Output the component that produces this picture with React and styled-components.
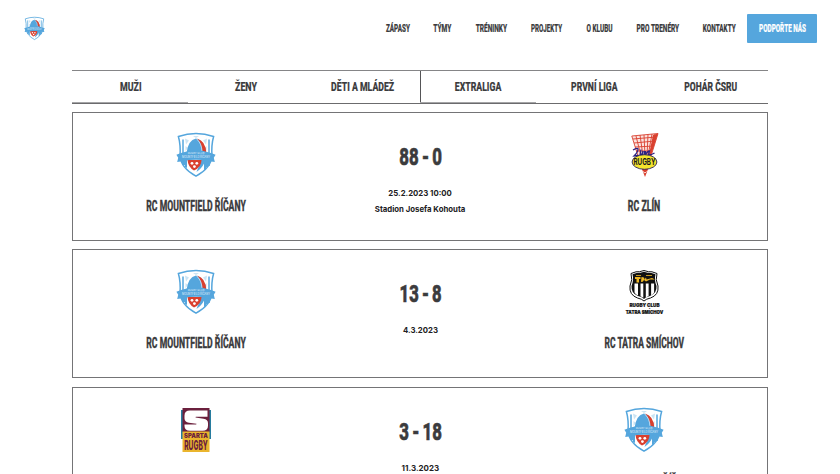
import React, { useLayoutEffect, useRef, useState } from "react";
import styled, { createGlobalStyle, css } from "styled-components";

const ink = "#3b3b3d";
const blue = "#55a6dd";
const red = "#d9402f";

const GlobalStyle = createGlobalStyle`
  * { box-sizing: border-box; }
  html, body { margin: 0; height: 100%; overflow: hidden; background: #fff; }
  body { color: ${ink}; font-family: Roboto, "Liberation Sans", sans-serif; }
`;

const display = css`
  font-family: Roboto, "Liberation Sans", sans-serif;
  font-weight: 800;
  -webkit-text-stroke: 0.2px currentColor;
`;

const FitBox = styled.span`
  display: flex;
  justify-content: center;
  width: ${(p) => p.$w}px;
  white-space: nowrap;
`;

const FitText = styled.span`
  display: block;
  flex: none;
  transform-origin: center;
`;

/* Condenses a label so that it takes exactly the given width. */
function Fit({ w, children }) {
  const ref = useRef(null);
  const [scale, setScale] = useState(1);
  useLayoutEffect(() => {
    setScale(w / parseFloat(getComputedStyle(ref.current).width));
  }, [w, children]);
  return (
    <FitBox $w={w}>
      <FitText ref={ref} style={{ transform: `translateX(0.5px) scaleX(${scale})` }}>
        {children}
      </FitText>
    </FitBox>
  );
}

const Page = styled.div`
  height: 474px;
  overflow: hidden;
`;

const Header = styled.header`
  display: flex;
  align-items: center;
  justify-content: space-between;
  height: 56px;
  padding: 0 23px 0 24px;
`;

const Nav = styled.nav`
  ${display}
  display: flex;
  align-items: center;
  font-size: 10.8px;
  line-height: 29px;
`;

const NavLink = styled.a`
  padding: 0 12px;
`;

const SupportButton = styled.a`
  display: flex;
  justify-content: center;
  width: 70px;
  height: 29px;
  border-radius: 1px;
  background: ${blue};
  color: #fff;
`;

const Main = styled.main`
  width: 696px;
  margin: 14px 0 0 72px;
`;

const Tabs = styled.div`
  display: grid;
  grid-template-columns: 1fr 1fr;
  height: 34px;
  border-top: 1px solid #858587;
  border-bottom: 1px solid #6b6b6d;
`;

const TabGroup = styled.div`
  display: flex;
  ${(p) => p.$divided && css`box-shadow: inset 1px 0 0 #555557;`}
`;

const Tab = styled.button`
  display: flex;
  justify-content: center;
  width: 116px;
  height: 32px;
  padding: 0;
  border: 0;
  border-bottom: 1px solid ${(p) => (p.$active ? "#a5a5a7" : "transparent")};
  background: none;
  color: inherit;
  font-size: 13.3px;
  line-height: 31px;
  ${display}
`;

const Matches = styled.div`
  display: grid;
  gap: 8.35px;
  margin-top: 8px;
`;

const Card = styled.article`
  display: grid;
  grid-template-columns: repeat(3, 224px);
  justify-content: center;
  height: 129px;
  border: 1px solid #747476;
`;

const Team = styled.div`
  display: flex;
  flex-direction: column;
  align-items: center;
  padding-top: 20px;
`;

const TeamName = styled.h3`
  ${display}
  margin: 18px 0 0;
  font-size: 13.8px;
  line-height: 22px;
  -webkit-text-stroke-width: 0.3px;
`;

const Result = styled.div`
  display: flex;
  flex-direction: column;
  align-items: center;
  padding-top: 28px;
`;

const Score = styled.strong`
  ${display}
  margin-bottom: 12px;
  font-size: 24.6px;
  line-height: 32px;
  word-spacing: -0.06em;
  -webkit-text-stroke-width: 0.7px;
`;

const Detail = styled.span`
  color: #202022;
  font: 700 8px/16px Inter, sans-serif;
`;

const Drawing = styled.svg`
  display: block;
  flex: none;
  overflow: visible;
  width: ${(p) => p.$w}px;
  height: ${(p) => p.$h}px;
`;

const RicanyLogo = ({ w = 40, h = 44 }) => (
  <Drawing $w={w} $h={h} viewBox="0 0 40 44">
    <path d="M2.4 3.5Q20-2.6 37.6 3.5 35.2 12 36 23 35 35 20 43.2 5 35 4 23 4.8 12 2.4 3.5Z" fill="#fff" stroke={blue} strokeWidth="1.5" />
    <path d="M7 6.5V20M33 6.500V20" stroke={blue} strokeWidth="1.5" />
    <path d="M9 5.5l4 2-3 4zM17 3l3 2 3-2zM31 5.5l-4 2 3 4zM9.5 13l2.5 2-2.5 3zM30.5 13l-2.5 2 2.5 3z" fill="#cbe4f4" />
    <path d="M10.5 20Q12 7 20 5.4 28 7 29.5 20Z" fill={blue} />
    <path d="M21 5.4Q30 8 30.3 20L26.5 18.5Q26 10 21 5.4Z" fill={red} />
    <path d="M20.500 6Q25.800 10 26 19" fill="none" stroke="#fff" strokeWidth=".6" />
    <path d="M28 27h6v6l-2-1v2h-2v2l-2 1ZM6 27h5v8l-2-1v-2H6Z" fill={blue} />
    <path d="M25.500 26h4q-1.500 8-9 13z" fill={blue} />
    <path d="M11.500 27h14q0 7-7.500 10.500-6-3.500-6.500-10.500Z" fill={red} />
    <g fill="#fff">
      <circle cx="16" cy="30.3" r="1.4" /><circle cx="20.800" cy="30.3" r="1.4" /><circle cx="18.400" cy="33.600" r="1.4" />
    </g>
    <path d="M.4 21.7 5 20Q20 14.5 35 20l4.6 1.700-1.800 3 1 4.200-5.300-.7Q20 25.500 6.500 28.200l-5.300.7 1-4.200Z" fill={blue} />
    <g fill="#fff" fillOpacity=".72" fontFamily="Inter, sans-serif" fontWeight="500" textAnchor="middle">
      <text x="20" y="20.8" fontSize="2.6">RUGBY CLUB</text>
      <text x="20" y="24.8" fontSize="3" textLength="28" lengthAdjust="spacingAndGlyphs">MOUNTFIELD ŘÍČANY</text>
    </g>
  </Drawing>
);

const ZlinLogo = () => (
  <Drawing $w={28} $h={44} viewBox="0 0 28 44">
    <path d="M2 3 28 .5 20 23.500H9Z" fill="#fbe3df" />
    <path d="M1.800 3 28 .5 21 23M1.800 3 8 23M6 3l5 20M10 2l3 21M14 2l1 21M18 1.500l-1 21.500M22 1l-4 22M25 1l-5 22M3 6l23-2M4 10l21-2M5 14l19-1M6 18h16" fill="none" stroke={red} strokeWidth=".9" />
    <path d="m23 2 5-1.500-7 22-2-1ZM11.500 35h7L15 44Z" fill={red} />
    <path d="M3 17q5-3 5-.5t-4 6.500l5-.5m2-6-1 5.500q2 0 3-4l-.5 4m2-4v4m1-4v4q2-4 4-4l-1 4q3 0 6-2" fill="none" stroke="#2b2383" strokeWidth="1.3" />
    <ellipse cx="14.500" cy="29" rx="12.400" ry="7.300" fill="#f5e52d" stroke="#29245c" strokeWidth=".9" />
    <text x="14.500" y="32.200" fill="#17171d" fontFamily="Inter, sans-serif" fontSize="8.800" fontWeight="700" textAnchor="middle" textLength="22" lengthAdjust="spacingAndGlyphs">RUGBY</text>
    <path d="m13 38.500 2 1.500 1.500-1.500" fill="none" stroke="#fff" strokeWidth=".8" />
  </Drawing>
);

const TatraLogo = () => (
  <Drawing $w={40} $h={44} viewBox="0 0 40 44">
    <path d="M7 3.500 12 1.800q3 .5 8-1.300 5 1.800 8 1.300l5 1.700q-2 6 1 12.500 1 9-7.500 12-4.500 1-6.500 3-2-2-6.500-3Q5 25 6 16 9 9.500 7 3.500Z" fill="#fff" stroke="#111" strokeWidth="1" />
    <path d="m8.500 4.300 4-1.200q4 0 7.500-1.300 3.500 1.300 7.500 1.300l4 1.200Q30 10 32.500 16 33 23.500 26 26q-4.500 1-6 3-1.500-2-6-3-7-2.500-6.500-10Q10 10 8.500 4.300Z" fill="#111" />
    <path d="M10.500 13.500H14V25.500q-2.500-.8-3.500-3Zm6 0h2.800V27.700q-1.300-1-2.800-1.500Zm5.300 0h2.800V26q-1.700.5-2.800 1.700Zm5.300 0h3v9q-.8 2-3 2.700Z" fill="#fff" />
    <path d="M11 7h5.500v2h-1.500v3.500h-2.500V9H11Zm6.500 0q4 0 2.500 3-1.500 3-3 1.500Zm4.500.5.5 2 5.500-1.500 3 1.500h-5l-4 2-2-1.500Z" fill="#efb724" />
    <path d="M12 5.500h5m5 0h6" stroke="#efb724" strokeWidth=".8" />
    <g fill="#111" stroke="#111" strokeWidth=".2" fontFamily="Inter, sans-serif" fontSize="5" fontWeight="900" textAnchor="middle">
      <text x="20.500" y="36.500" textLength="30" lengthAdjust="spacingAndGlyphs">RUGBY CLUB</text>
      <text x="20.500" y="43.500" textLength="37.5" lengthAdjust="spacingAndGlyphs">TATRA SMÍCHOV</text>
    </g>
  </Drawing>
);

const SpartaLogo = () => (
  <Drawing $w={30} $h={44} viewBox="0 0 30 44">
    <path d="M0 2h30v29H0Z" fill="#277c9f" />
    <path d="M1.500 0h27v24h-27Z" fill="#6b203d" />
    <path d="M1.500 23.500h27V44h-27Z" fill="#eab52d" />
    <path d="M26.500 2.500H9Q3.500 2.500 3.500 7.500v3q0 3.500 4.500 4.200l7.500 1.100-.3.700H3.500v1.500q0 4.800 5.500 4.800h12.500q5.500 0 5.500-5v-2.600q0-3.700-4.500-4.400L14.500 9.500l.3-.7h11.700Z" fill="#fff" />
    <g fill="#6b203d" fontFamily="Inter, sans-serif" fontWeight="900" textAnchor="middle">
      <text x="15" y="30.200" fontSize="6" textLength="24" lengthAdjust="spacingAndGlyphs">SPARTA</text>
      <text x="15" y="41.800" fontSize="13.500" fontWeight="800" textLength="23.5" lengthAdjust="spacingAndGlyphs">RUGBY</text>
    </g>
  </Drawing>
);

const ricany = { name: "RC MOUNTFIELD ŘÍČANY", width: 99.5, Logo: RicanyLogo };

const links = [
  ["ZÁPASY", 24], ["TÝMY", 18], ["TRÉNINKY", 31.4], ["PROJEKTY", 31],
  ["O KLUBU", 26.2], ["PRO TRENÉRY", 42.5], ["KONTAKTY", 32.8],
];

const tabs = [
  [["MUŽI", 21.5], ["ŽENY", 22], ["DĚTI A MLÁDEŽ", 63]],
  [["EXTRALIGA", 46.5], ["PRVNÍ LIGA", 46.5], ["POHÁR ČSRU", 53]],
];

const matches = [
  { home: ricany, away: { name: "RC ZLÍN", width: 32.5, Logo: ZlinLogo }, score: "88 - 0", scoreWidth: 42.5,
    details: [["25.2.2023 10:00", 63.5], ["Stadion Josefa Kohouta", 90.5]] },
  { home: ricany, away: { name: "RC TATRA SMÍCHOV", width: 79.5, Logo: TatraLogo }, score: "13 - 8", scoreWidth: 42,
    details: [["4.3.2023", 35]] },
  { home: { name: "RC SPARTA PRAHA", width: 75, Logo: SpartaLogo }, away: ricany, score: "3 - 18", scoreWidth: 42.5,
    details: [["11.3.2023", 37.5]] },
];

const TeamBlock = ({ team }) => (
  <Team>
    <team.Logo />
    <TeamName><Fit w={team.width}>{team.name}</Fit></TeamName>
  </Team>
);

export default function App() {
  return (
    <Page>
      <GlobalStyle />
      <Header>
        <RicanyLogo w={21} h={23} />
        <Nav>
          {links.map(([label, w]) => (
            <NavLink key={label}><Fit w={w}>{label}</Fit></NavLink>
          ))}
          <SupportButton><Fit w={47}>PODPOŘTE NÁS</Fit></SupportButton>
        </Nav>
      </Header>
      <Main>
        <Tabs>
          {tabs.map((group, g) => (
            <TabGroup key={g} $divided={g > 0}>
              {group.map(([label, w], i) => (
                <Tab key={label} $active={i === 0}><Fit w={w}>{label}</Fit></Tab>
              ))}
            </TabGroup>
          ))}
        </Tabs>
        <Matches>
          {matches.map((m) => (
            <Card key={m.score}>
              <TeamBlock team={m.home} />
              <Result>
                <Score><Fit w={m.scoreWidth}>{m.score}</Fit></Score>
                {m.details.map(([text, w]) => (
                  <Detail key={text}><Fit w={w}>{text}</Fit></Detail>
                ))}
              </Result>
              <TeamBlock team={m.away} />
            </Card>
          ))}
        </Matches>
      </Main>
    </Page>
  );
}
